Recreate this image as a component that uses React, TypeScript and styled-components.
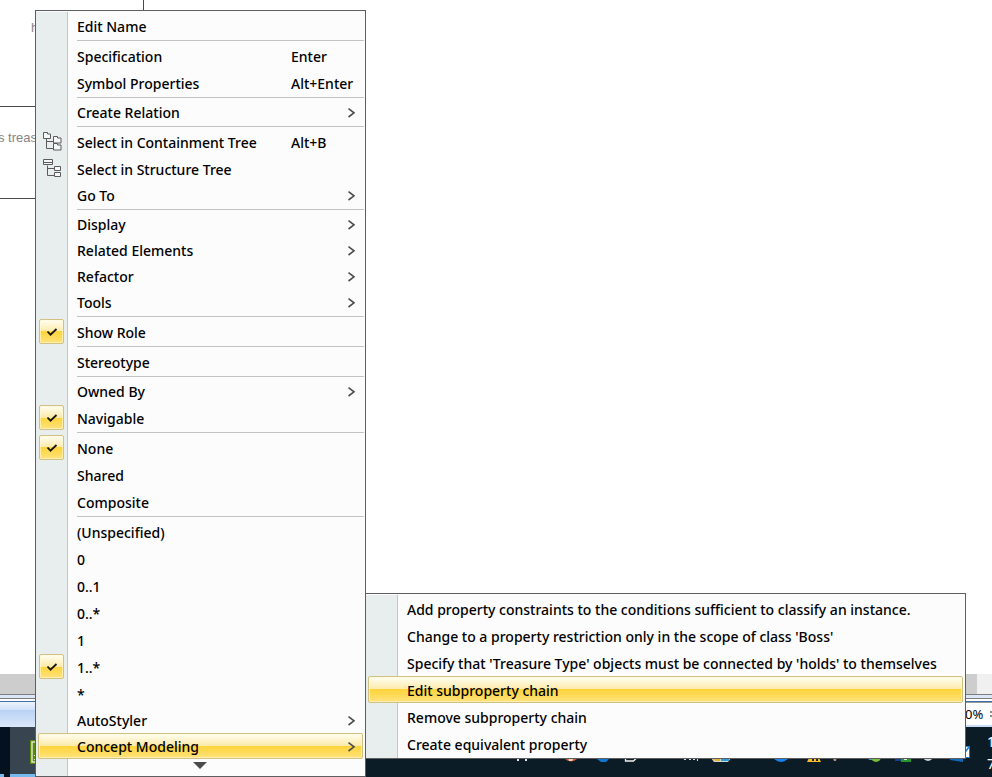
import React from "react";
import styled, { createGlobalStyle, css } from "styled-components";

const Global = createGlobalStyle`
  *, *::before, *::after { box-sizing: border-box; }
  html, body, #root { height: 100%; margin: 0; }
  body {
    background: #fff;
    overflow: hidden;
    font-family: "Noto Sans", "Open Sans", sans-serif;
    font-size: 14px;
    color: #000;
  }
`;

/* ---------- editor behind the menus ---------- */

const Screen = styled.div`
  position: relative;
  display: flex;
  flex-direction: column;
  height: 100vh;
  overflow: hidden;
`;

const Canvas = styled.main`
  position: relative;
  flex: 1;
  min-height: 0;
  overflow: hidden;
  background: #fff;
`;

const Shape = styled.div<{ $left: number; $top: number; $width: number; $height: number }>`
  position: absolute;
  left: ${(p) => p.$left}px;
  top: ${(p) => p.$top}px;
  width: ${(p) => p.$width}px;
  height: ${(p) => p.$height}px;
  border: 1px solid #4a4a4a;
`;

const ShapeLabel = styled.span<{ $left: number; $top: number }>`
  position: absolute;
  left: ${(p) => p.$left}px;
  top: ${(p) => p.$top}px;
  font: 13px/16px "Liberation Sans", sans-serif;
  color: #858585;
  white-space: nowrap;
`;

const ScrollTrack = styled.div`
  height: 20px;
  padding-right: 15px;
  background: #f0f0f0;
`;

const ScrollThumb = styled.div`
  height: 20px;
  background: #cdcdcd;
`;

const Frame = styled.div`
  height: 8px;
  border-top: 1px solid #7d7d7d;
  border-bottom: 1px solid #3f6cab;
  background: linear-gradient(#dbe7f8 3px, #7d7d7d 3px, #7d7d7d 4px, #fff 4px);
`;

const StatusBar = styled.footer`
  display: flex;
  justify-content: flex-end;
  height: 25px;
  background: linear-gradient(#eef4fd 0, #cfe0f8 8px, #b9d2f4 8px, #dbe8fa 100%);
`;

const ZoomLevel = styled.output`
  display: flex;
  justify-content: space-between;
  width: 32px;
  padding: 0 0 0 5px;
  background: #fff;
  border-top: 1px solid #9a9a9a;
  border-bottom: 2px solid #c9dcf8;
  font-size: 13px;
  line-height: 22px;
  white-space: nowrap;
`;

const Grip = styled.span`
  align-self: center;
  width: 2px;
  height: 6px;
  border: solid #8d8d8d;
  border-width: 2px 0;
`;

const Taskbar = styled.nav`
  display: flex;
  justify-content: space-between;
  height: 50px;
  background: #0c1c26;
`;

const TaskButtons = styled.div`
  display: flex;
`;

const TaskButton = styled.button<{ $active?: boolean }>`
  display: flex;
  align-items: center;
  width: ${(p) => (p.$active ? 62 : 10)}px;
  height: 50px;
  padding: ${(p) => (p.$active ? "0 0 0 20px" : "0")};
  border: 0;
  background: ${(p) =>
    p.$active
      ? "linear-gradient(#38444f 47px, #76b9ed 47px)"
      : "linear-gradient(#76b9ed, #76b9ed) 0 47px / 4px 3px no-repeat #04121f"};
`;

const Tray = styled.div`
  display: flex;
`;

const Clock = styled.time`
  display: flex;
  flex-direction: column;
  width: 5px;
  padding-top: 4px;
  overflow: hidden;
  color: #fff;
  font-size: 14px;
  line-height: 22px;
`;

/* ---------- menus ---------- */

const GUTTER = 32;

const Menu = styled.ul`
  list-style: none;
  margin: 0;
  padding: 1px 0 0;
  border: 1px solid #5e5e60;
  background:
    linear-gradient(#fcfcfc, #fcfcfc) 0 0 / 100% 1px no-repeat,
    linear-gradient(90deg, #e8eeee ${GUTTER - 1}px, #c3c5c8 ${GUTTER - 1}px, #c3c5c8 ${GUTTER}px, #fcfcfc ${GUTTER}px);
`;

const ContextMenu = styled(Menu)`
  position: absolute;
  left: 35px;
  top: 10px;
  width: 331px;
`;

const SubMenu = styled(Menu)`
  position: absolute;
  left: 100%;
  bottom: 0;
  min-width: 601px;
  padding-bottom: 1px;
`;

const Entry = styled.li`
  position: relative;
`;

const Separator = styled.li`
  height: 3px;
  margin: 0 1px 0 41px;
  padding-top: 1px;
  &::before {
    content: "";
    display: block;
    height: 1px;
    background: #c3c3c3;
  }
`;

const gold = css`
  border: 1px solid #d3c083;
  border-radius: 2px;
  background: linear-gradient(#fffef2 0, #fdeaa8 50%, #ffd43a 50%, #ffe27c 100%);
  box-shadow: inset 0 0 0 1px rgba(255, 250, 215, 0.6);
`;

const Item = styled.button<{ $compact?: boolean; $highlighted?: boolean }>`
  display: grid;
  grid-template-columns: 38px 1fr auto;
  align-items: center;
  width: calc(100% - 4px);
  height: ${(p) => (p.$compact ? 26 : 27)}px;
  margin: 0 2px;
  padding: 0;
  border: 1px solid transparent;
  background: none;
  color: inherit;
  font: inherit;
  font-weight: 500;
  line-height: 20px;
  text-align: left;
  white-space: nowrap;
  ${(p) => p.$highlighted && gold}
`;

const IconCell = styled.span`
  display: flex;
  align-items: center;
  height: 18px;
  padding-left: 4px;
`;

const CheckBox = styled.span`
  display: flex;
  flex: none;
  width: 25px;
  height: 25px;
  margin-left: -4px;
  ${gold}
`;

const Label = styled.span`
  padding-top: 2px;
`;

const Shortcut = styled.kbd`
  width: 71px;
  padding-top: 2px;
  font: inherit;
`;

const ArrowCell = styled.span`
  display: flex;
  width: 14px;
  padding-top: 2px;
`;

const Scroller = styled.button`
  display: flex;
  justify-content: center;
  width: 100%;
  height: 17px;
  padding: 3px 1px 0 0;
  border: 0;
  background: none;
`;

/* ---------- drawings ---------- */

const Tick = () => (
  <svg width="23" height="23" viewBox="0 0 23 23" fill="none" stroke="#151515" strokeWidth="1.8">
    <path d="M7.5 11.5l3 3.2L16.5 9" />
  </svg>
);

const Chevron = () => (
  <svg width="7" height="10" viewBox="0 0 7 10" fill="none" stroke="#4c4c4c" strokeWidth="1.6">
    <path d="M0.5 0.7L6 4.8L0.5 9" />
  </svg>
);

const ContainmentIcon = () => (
  <svg width="19" height="19" viewBox="0 0 19 19" fill="#f6f8f8" stroke="#5b5b5d">
    <path d="M3.5 7v9.5h7M3.5 9.5h7" fill="none" />
    <path d="M0.5 0.5h4v1.500h3v4.500h-7z" />
    <path d="M10.5 4.5h4v1.500h3.500v5h-7.500z" />
    <path d="M10.5 11.5h4v1.500h3.500v5h-7.500z" />
  </svg>
);

const StructureIcon = () => (
  <svg width="19" height="19" viewBox="0 0 19 19" fill="#f6f8f8" stroke="#5b5b5d">
    <path d="M4.5 6.5v10h7M4.5 9.5h7" fill="none" />
    <path d="M0.5 0.5h9v5h-9zM0.5 3.5h9" />
    <path d="M11.500 7.500h6v4h-6zM11.500 13.500h6v4h-6z" />
  </svg>
);

const GreenApp = () => (
  <svg width="24" height="24" viewBox="0 0 24 24">
    <rect width="24" height="24" fill="#5b8a0c" />
    <path d="M2 2h20v20H2z" fill="none" stroke="#dfe8c8" strokeWidth="1.5" />
    <path d="M4 15l6 6M4 19l3 3" stroke="#dfe8c8" />
  </svg>
);

const TrayIcons = () => (
  <svg width="477" height="50" viewBox="510 727 477 50" aria-hidden="true">
    <path d="M517 750h2v11h-2zM525 750h2v11h-2z" fill="#e8e8e8" />
    <circle cx="571" cy="753" r="8.5" fill="#d8532b" />
    <path d="M568 758h6l-2 3h-3z" fill="#f4d2c4" />
    <path d="M597 750h12v9l-3 3h-5l-4-3z" fill="#0f78d4" />
    <path d="M625.5 748v13h8l4-4" fill="none" stroke="#f2f2f2" strokeWidth="1.3" />
    <path d="M684 758h2v2h-2zM689 757h2v3h-2zM693 757h2v3h-2zM697 758h1v3h-1z" fill="#dedede" />
    <path d="M711 748h20v10l-3 4h-14l-3-4z" fill="#cfd8d0" />
    <path d="M713 759h7v2h-5z" fill="#e3b32d" />
    <path d="M721 759h8v2h-8z" fill="#2f9ad6" />
    <circle cx="781" cy="753" r="9" fill="#1683f0" />
    <path d="M807 762l7-14 7 14z" fill="#f6bb25" />
    <path d="M812 758h2v3h-2zM816 758h2v3h-2z" fill="#222" />
    <path d="M832 756h5l-1 5h-2z" fill="#b98e83" />
    <path d="M866 750h8v10h-5z" fill="#3a9fd6" />
    <circle cx="876" cy="757" r="5" fill="#79bd3a" />
    <path d="M873 757h5v2h-5z" fill="#fff" />
    <path d="M895 750h6v11h-6z" fill="#173f8c" />
    <path d="M901 750h10v12h-10z" fill="#23972c" />
    <path d="M904 758h3v2h-3z" fill="#d8f0d8" />
    <circle cx="928" cy="756" r="5" fill="#d4d4d4" />
    <path d="M950 748h13v14l-13-2z" fill="#0f6ac0" />
    <path d="M955.5 746.5h14v11h-14z" fill="#fff" stroke="#1a7fd6" />
    <path d="M962 756l7-9" stroke="#1a7fd6" strokeWidth="1.6" />
  </svg>
);

const ScrollArrow = () => (
  <svg width="14" height="7" viewBox="0 0 14 7">
    <path d="M0 0h14L7 7z" fill="#4a4a4a" />
  </svg>
);

/* ---------- data ---------- */

type Row = {
  label: string;
  shortcut?: string;
  icon?: "containment" | "structure";
  checked?: boolean;
  compact?: boolean;
  arrow?: boolean;
  highlighted?: boolean;
  children?: Row[];
};

const more = (label: string): Row => ({ label, arrow: true, compact: true });

const chainRows: Row[] = [
  { label: "Add property constraints to the conditions sufficient to classify an instance." },
  { label: "Change to a property restriction only in the scope of class 'Boss'" },
  { label: "Specify that 'Treasure Type' objects must be connected by 'holds' to themselves" },
  { label: "Edit subproperty chain", highlighted: true },
  { label: "Remove subproperty chain" },
  { label: "Create equivalent property" },
];

const groups: Row[][] = [
  [{ label: "Edit Name" }],
  [
    { label: "Specification", shortcut: "Enter" },
    { label: "Symbol Properties", shortcut: "Alt+Enter" },
  ],
  [more("Create Relation")],
  [
    { label: "Select in Containment Tree", shortcut: "Alt+B", icon: "containment" },
    { label: "Select in Structure Tree", icon: "structure" },
    more("Go To"),
  ],
  [more("Display"), more("Related Elements"), more("Refactor"), more("Tools")],
  [{ label: "Show Role", checked: true }],
  [{ label: "Stereotype" }],
  [more("Owned By"), { label: "Navigable", checked: true }],
  [{ label: "None", checked: true }, { label: "Shared" }, { label: "Composite" }],
  [
    { label: "(Unspecified)" },
    { label: "0" },
    { label: "0..1" },
    { label: "0..*" },
    { label: "1" },
    { label: "1..*", checked: true },
    { label: "*" },
    more("AutoStyler"),
    { ...more("Concept Modeling"), highlighted: true, children: chainRows },
  ],
];

function MenuRow({ row }: { row: Row }) {
  return (
    <Entry role="none">
      <Item
        type="button"
        role={row.checked ? "menuitemcheckbox" : "menuitem"}
        aria-checked={row.checked}
        aria-haspopup={row.arrow ? "menu" : undefined}
        $compact={row.compact}
        $highlighted={row.highlighted}
      >
        <IconCell>
          {row.checked && <CheckBox><Tick /></CheckBox>}
          {row.icon === "containment" && <ContainmentIcon />}
          {row.icon === "structure" && <StructureIcon />}
        </IconCell>
        <Label>{row.label}</Label>
        {row.shortcut && <Shortcut>{row.shortcut}</Shortcut>}
        {row.arrow && <ArrowCell><Chevron /></ArrowCell>}
      </Item>
      {row.children && (
        <SubMenu role="menu" aria-label={row.label}>
          {row.children.map((child) => <MenuRow key={child.label} row={child} />)}
        </SubMenu>
      )}
    </Entry>
  );
}

export default function App() {
  return (
    <Screen>
      <Global />
      <Canvas>
        <Shape $left={-2} $top={-2} $width={146} $height={109} />
        <Shape $left={-2} $top={106} $width={80} $height={93} />
        <ShapeLabel $left={31} $top={20}>h</ShapeLabel>
        <ShapeLabel $left={-2} $top={130}>s treas</ShapeLabel>
      </Canvas>
      <ScrollTrack><ScrollThumb /></ScrollTrack>
      <Frame />
      <StatusBar><ZoomLevel>0%<Grip /></ZoomLevel></StatusBar>
      <Taskbar aria-label="Taskbar">
        <TaskButtons>
          <TaskButton type="button" aria-label="Running app" />
          <TaskButton type="button" aria-label="Modeling tool" $active><GreenApp /></TaskButton>
        </TaskButtons>
        <Tray>
          <TrayIcons />
          <Clock><span>1</span><span>7</span></Clock>
        </Tray>
      </Taskbar>
      <ContextMenu role="menu" aria-label="Context menu">
        {groups.map((rows, i) => (
          <React.Fragment key={i}>
            {i > 0 && <Separator role="separator" />}
            {rows.map((row) => <MenuRow key={row.label} row={row} />)}
          </React.Fragment>
        ))}
        <li role="none">
          <Scroller type="button" aria-label="Scroll down"><ScrollArrow /></Scroller>
        </li>
      </ContextMenu>
    </Screen>
  );
}
